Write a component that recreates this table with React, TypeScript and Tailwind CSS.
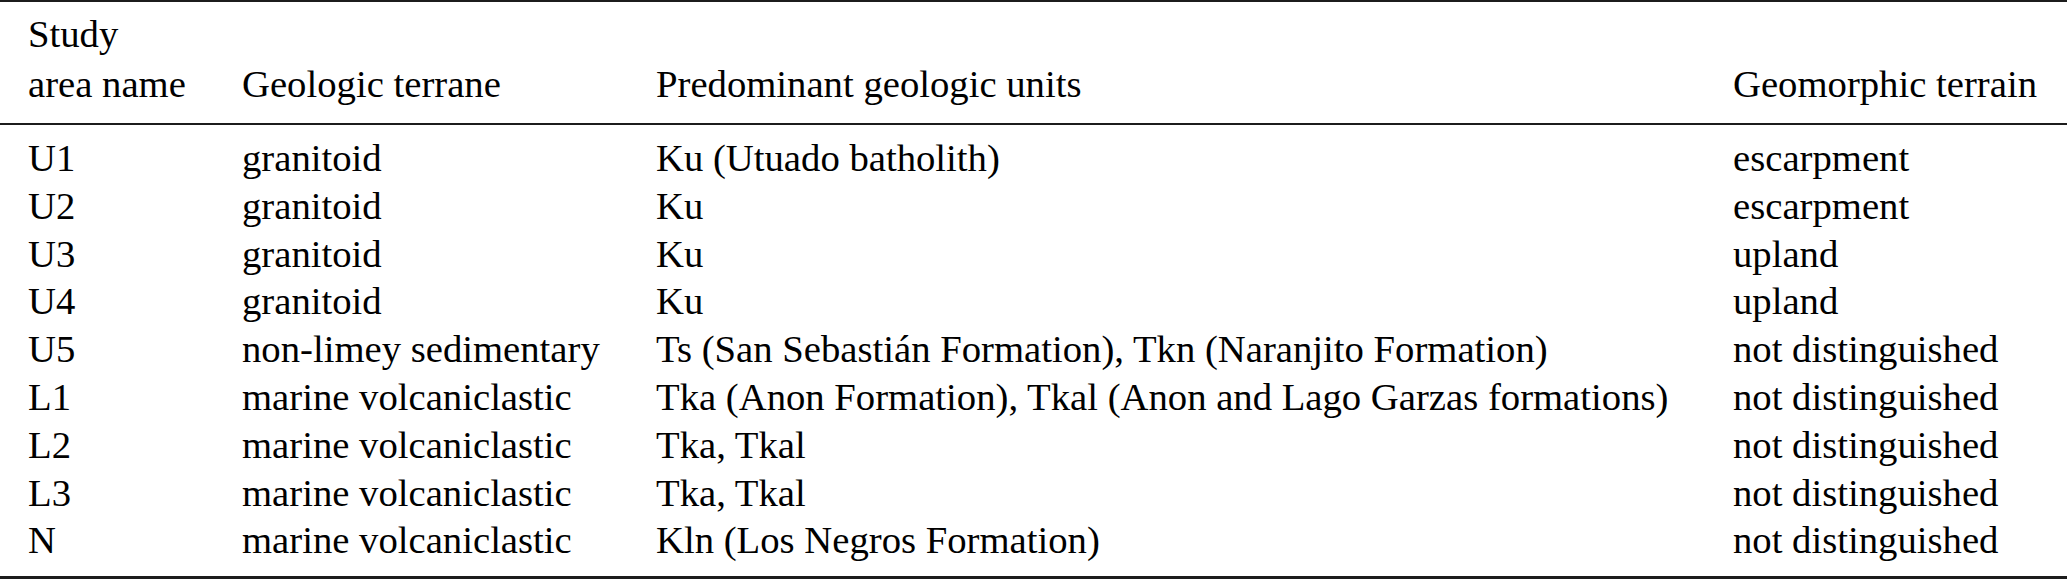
const ROWS = [
  ['U1', 'granitoid', 'Ku (Utuado batholith)', 'escarpment'],
  ['U2', 'granitoid', 'Ku', 'escarpment'],
  ['U3', 'granitoid', 'Ku', 'upland'],
  ['U4', 'granitoid', 'Ku', 'upland'],
  ['U5', 'non-limey sedimentary', 'Ts (San Sebastián Formation), Tkn (Naranjito Formation)', 'not distinguished'],
  ['L1', 'marine volcaniclastic', 'Tka (Anon Formation), Tkal (Anon and Lago Garzas formations)', 'not distinguished'],
  ['L2', 'marine volcaniclastic', 'Tka, Tkal', 'not distinguished'],
  ['L3', 'marine volcaniclastic', 'Tka, Tkal', 'not distinguished'],
  ['N', 'marine volcaniclastic', 'Kln (Los Negros Formation)', 'not distinguished'],
];

// grille commune : colonnes a largeur fixe comme dans la table source
const GRID = 'grid grid-cols-[214px_414px_1077px_1fr] pl-[28px] font-[Liberation_Serif]';

export default function App() {
  return (
    <div className="h-[583px] w-[2067px] overflow-hidden bg-white text-[38.7px] text-black">
      {/* filet du haut */}
      <div className="h-[2px] bg-[#1c1c1c]" />

      {/* en-tete */}
      <div className={`${GRID} items-end pt-[8px] pb-[14px] leading-[49.5px]`}>
        <div className="font-[Liberation_Serif]">
          Study
          <br />
          area name
        </div>
        <div className="font-[Liberation_Serif]">Geologic terrane</div>
        <div className="font-[Liberation_Serif]">Predominant geologic units</div>
        <div className="font-[Liberation_Serif]">Geomorphic terrain</div>
      </div>

      <div className="h-[2px] bg-[#1c1c1c]" />

      {/* corps */}
      <div className="pt-[10px] pb-[11px] leading-[47.8px]">
        {ROWS.map((r) => (
          <div key={r[0]} className={`${GRID} whitespace-nowrap`}>
            {r.map((c, i) => (
              <div key={i} className="font-[Liberation_Serif]">
                {c}
              </div>
            ))}
          </div>
        ))}
      </div>

      {/* filet du bas */}
      <div className="h-[3px] bg-[#1c1c1c]" />
    </div>
  );
}
